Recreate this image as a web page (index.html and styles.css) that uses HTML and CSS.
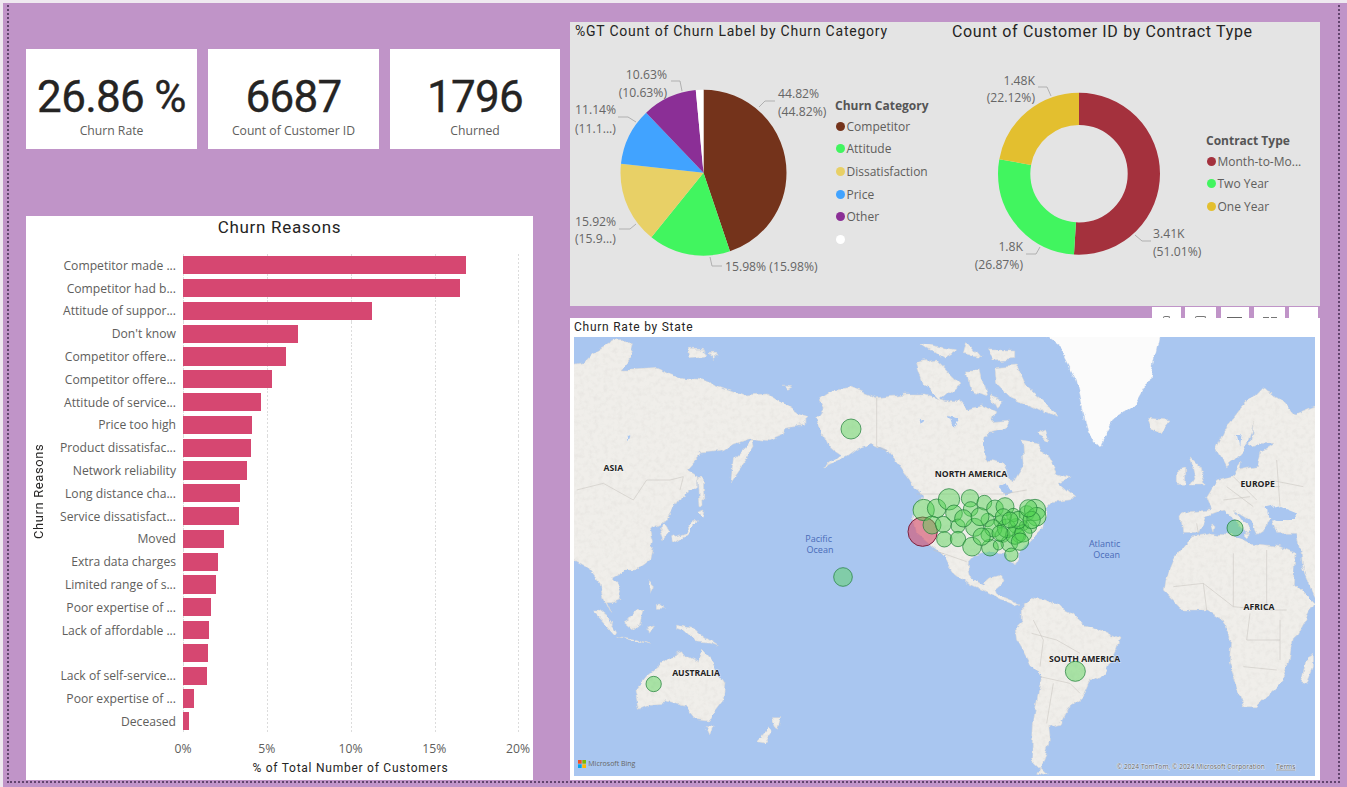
FILE: index.html
```html
<!DOCTYPE html>
<html lang="en">
<head>
<meta charset="utf-8">
<title>Churn Dashboard</title>
<link rel="stylesheet" href="styles.css">
</head>
<body>
<main class="report">
  <div class="guide"></div>
  <section class="left">
    <div class="kpis">
      <div class="card"><div class="value">26.86 %</div><div class="caption">Churn Rate</div></div>
      <div class="card"><div class="value">6687</div><div class="caption">Count of Customer ID</div></div>
      <div class="card"><div class="value">1796</div><div class="caption">Churned</div></div>
    </div>
    <div class="reasons">
      <h2 class="reasons-title">Churn Reasons</h2>
      <div class="bar-area">
        <div class="y-title">Churn Reasons</div>
        <div class="bars">
          <div class="row"><span class="lbl">Competitor made ...</span><span class="track"><i class="bar" style="width:282.5px"></i></span></div>
          <div class="row"><span class="lbl">Competitor had b...</span><span class="track"><i class="bar" style="width:277px"></i></span></div>
          <div class="row"><span class="lbl">Attitude of suppor...</span><span class="track"><i class="bar" style="width:189px"></i></span></div>
          <div class="row"><span class="lbl">Don't know</span><span class="track"><i class="bar" style="width:115px"></i></span></div>
          <div class="row"><span class="lbl">Competitor offere...</span><span class="track"><i class="bar" style="width:103px"></i></span></div>
          <div class="row"><span class="lbl">Competitor offere...</span><span class="track"><i class="bar" style="width:88.5px"></i></span></div>
          <div class="row"><span class="lbl">Attitude of service...</span><span class="track"><i class="bar" style="width:78px"></i></span></div>
          <div class="row"><span class="lbl">Price too high</span><span class="track"><i class="bar" style="width:69px"></i></span></div>
          <div class="row"><span class="lbl">Product dissatisfac...</span><span class="track"><i class="bar" style="width:68px"></i></span></div>
          <div class="row"><span class="lbl">Network reliability</span><span class="track"><i class="bar" style="width:64px"></i></span></div>
          <div class="row"><span class="lbl">Long distance cha...</span><span class="track"><i class="bar" style="width:57px"></i></span></div>
          <div class="row"><span class="lbl">Service dissatisfact...</span><span class="track"><i class="bar" style="width:56px"></i></span></div>
          <div class="row"><span class="lbl">Moved</span><span class="track"><i class="bar" style="width:41px"></i></span></div>
          <div class="row"><span class="lbl">Extra data charges</span><span class="track"><i class="bar" style="width:34.5px"></i></span></div>
          <div class="row"><span class="lbl">Limited range of s...</span><span class="track"><i class="bar" style="width:32.5px"></i></span></div>
          <div class="row"><span class="lbl">Poor expertise of ...</span><span class="track"><i class="bar" style="width:28px"></i></span></div>
          <div class="row"><span class="lbl">Lack of affordable ...</span><span class="track"><i class="bar" style="width:26px"></i></span></div>
          <div class="row"><span class="lbl"></span><span class="track"><i class="bar" style="width:25px"></i></span></div>
          <div class="row"><span class="lbl">Lack of self-service...</span><span class="track"><i class="bar" style="width:24px"></i></span></div>
          <div class="row"><span class="lbl">Poor expertise of ...</span><span class="track"><i class="bar" style="width:10.5px"></i></span></div>
          <div class="row"><span class="lbl">Deceased</span><span class="track"><i class="bar" style="width:5.5px"></i></span></div>
        </div>
      </div>
      <div class="ticks">
        <span class="tick">0%</span><span class="tick">5%</span><span class="tick">10%</span><span class="tick">15%</span><span class="tick">20%</span>
      </div>
      <div class="x-title">% of Total Number of Customers</div>
    </div>
  </section>

  <section class="right">
    <div class="charts">
      <article class="panel pie-panel">
        <h2 class="panel-title">%GT Count of Churn Label by Churn Category</h2>
        <div class="panel-body">
          <svg class="pie-svg" viewBox="570 48 262 258" width="262" height="258">
            <g fill="none" stroke-width="83" transform="rotate(-90 703.5 172.7)">
              <circle cx="703.5" cy="172.7" r="41.5" pathLength="100" stroke="#74331b" stroke-dasharray="44.82 55.18" stroke-dashoffset="0"/>
              <circle cx="703.5" cy="172.7" r="41.5" pathLength="100" stroke="#41f55f" stroke-dasharray="15.98 84.02" stroke-dashoffset="-44.82"/>
              <circle cx="703.5" cy="172.7" r="41.5" pathLength="100" stroke="#e8d066" stroke-dasharray="15.92 84.08" stroke-dashoffset="-60.8"/>
              <circle cx="703.5" cy="172.7" r="41.5" pathLength="100" stroke="#41a3ff" stroke-dasharray="11.14 88.86" stroke-dashoffset="-76.72"/>
              <circle cx="703.5" cy="172.7" r="41.5" pathLength="100" stroke="#8b2f96" stroke-dasharray="10.63 89.37" stroke-dashoffset="-87.86"/>
              <circle cx="703.5" cy="172.7" r="41.5" pathLength="100" stroke="#ffffff" stroke-dasharray="1.51 98.49" stroke-dashoffset="-98.49"/>
            </g>
            <g class="leaders">
              <polyline points="671,81 680,81 682,91"/>
              <polyline points="618,117 628,117 636,122"/>
              <polyline points="619,229 630,229 636,224"/>
              <polyline points="710,257 712,266 722,266"/>
              <polyline points="759,107 765,101 775,101"/>
            </g>
            <g class="dlabels">
              <text x="667" y="79" text-anchor="end">10.63%</text>
              <text x="667" y="97" text-anchor="end">(10.63%)</text>
              <text x="575" y="114">11.14%</text>
              <text x="575" y="133">(11.1...)</text>
              <text x="575" y="226">15.92%</text>
              <text x="575" y="243">(15.9...)</text>
              <text x="725" y="271">15.98% (15.98%)</text>
              <text x="778" y="98">44.82%</text>
              <text x="778" y="116">(44.82%)</text>
            </g>
          </svg>
          <div class="legend pie-legend">
            <div class="legend-title">Churn Category</div>
            <div class="legend-item"><i class="dot c-brown"></i>Competitor</div>
            <div class="legend-item"><i class="dot c-green"></i>Attitude</div>
            <div class="legend-item"><i class="dot c-sand"></i>Dissatisfaction</div>
            <div class="legend-item"><i class="dot c-blue"></i>Price</div>
            <div class="legend-item"><i class="dot c-purple"></i>Other</div>
            <div class="legend-item"><i class="dot c-white"></i></div>
          </div>
        </div>
      </article>
      <article class="panel donut-panel">
        <h2 class="panel-title donut-title">Count of Customer ID by Contract Type</h2>
        <div class="panel-body">
          <svg class="donut-svg" viewBox="947 48 258 258" width="258" height="258">
            <g fill="none" stroke-width="32.3" transform="rotate(-90 1079 173.7)">
              <circle cx="1079" cy="173.7" r="64.85" pathLength="100" stroke="#a4313d" stroke-dasharray="51.01 48.99" stroke-dashoffset="0"/>
              <circle cx="1079" cy="173.7" r="64.85" pathLength="100" stroke="#41f55f" stroke-dasharray="26.87 73.13" stroke-dashoffset="-51.01"/>
              <circle cx="1079" cy="173.7" r="64.85" pathLength="100" stroke="#e3bf2f" stroke-dasharray="22.12 77.88" stroke-dashoffset="-77.88"/>
            </g>
            <g class="leaders">
              <polyline points="1038,87 1047,87 1051,96"/>
              <polyline points="1026,254 1036,254 1040,247"/>
              <polyline points="1135,235 1142,241 1151,241"/>
            </g>
            <g class="dlabels">
              <text x="1035" y="85" text-anchor="end">1.48K</text>
              <text x="1035" y="102" text-anchor="end">(22.12%)</text>
              <text x="1023" y="251" text-anchor="end">1.8K</text>
              <text x="1023" y="269" text-anchor="end">(26.87%)</text>
              <text x="1153" y="238">3.41K</text>
              <text x="1153" y="256">(51.01%)</text>
            </g>
          </svg>
          <div class="legend donut-legend">
            <div class="legend-title">Contract Type</div>
            <div class="legend-item"><i class="dot c-maroon"></i>Month-to-Mo...</div>
            <div class="legend-item"><i class="dot c-green"></i>Two Year</div>
            <div class="legend-item"><i class="dot c-gold"></i>One Year</div>
          </div>
        </div>
      </article>
    </div>

    <div class="tabs">
      <span class="tab tab-a"><i class="mark mark-arc"></i></span>
      <span class="tab tab-b"><i class="mark mark-circle"></i></span>
      <span class="tab tab-c"><i class="mark mark-line"></i></span>
      <span class="tab tab-d"><i class="mark mark-dash"></i></span>
      <span class="tab tab-e"></span>
    </div>

    <article class="map-panel">
      <h2 class="map-title">Churn Rate by State</h2>
      <svg class="map" viewBox="12 51 2223 1317" width="741" height="439">
        <defs>
          <filter id="coast" x="-40" y="-40" width="2360" height="1480" filterUnits="userSpaceOnUse">
            <feTurbulence type="fractalNoise" baseFrequency=".022" numOctaves="5" seed="3" result="n"/>
            <feDisplacementMap in="SourceGraphic" in2="n" scale="26" xChannelSelector="R" yChannelSelector="G"/>
            <feGaussianBlur stdDeviation="1"/>
          </filter>
          <filter id="terrain" x="-40" y="-40" width="2360" height="1480" filterUnits="userSpaceOnUse">
            <feTurbulence type="fractalNoise" baseFrequency=".022" numOctaves="5" seed="3" result="n"/>
            <feDisplacementMap in="SourceGraphic" in2="n" scale="26" xChannelSelector="R" yChannelSelector="G" result="d"/>
            <feGaussianBlur in="d" stdDeviation="1" result="soft"/>
            <feTurbulence type="fractalNoise" baseFrequency=".07" numOctaves="4" seed="8" result="t"/>
            <feColorMatrix in="t" type="matrix" values="0 0 0 0 .55 0 0 0 0 .53 0 0 0 0 .5 .4 0 0 0 -.17" result="shade"/>
            <feComposite in="shade" in2="soft" operator="in" result="shaded"/>
            <feMerge><feMergeNode in="soft"/><feMergeNode in="shaded"/></feMerge>
          </filter>
        </defs>
        <rect class="water" x="12" y="51" width="2223" height="1317"/>
        <g class="land" filter="url(#terrain)">
          <path d="M-60 150L35 135 70 100 130 65 190 65 180 110 150 150 195 150 260 145 295 160 330 172 400 180 440 197 520 225 590 222 640 250 690 285 717 295 700 312 650 322 642 345 600 362 540 355 490 372 450 397 395 402 352 450 385 470 382 500 330 530 310 565 288 600 240 622 250 660 240 720 200 750 170 750 125 775 155 810 150 835 125 845 110 845 125 880 105 840 90 790 78 775 55 745 15 722 -60 722Z"/>
          <path d="M355 85L400 85 410 105 360 110Z M415 100L445 100 430 112Z M640 195L665 197 650 205Z"/>
          <path d="M482 490L490 420 530 380 548 355 552 385 530 420 495 470Z"/>
          <path d="M385 475L400 475 402 560 390 560Z M385 577L405 570 400 592Z M310 665L350 640 385 605 375 598 345 635 308 650Z M280 610L300 640 282 662 268 620Z"/>
          <path d="M65 870L100 905 135 945 140 935 115 895 85 870Z M140 952L190 965 240 975 190 960Z M160 905L190 930 215 915 225 875 205 870 185 890Z M235 785L250 800 240 820Z M262 850L280 865 262 865Z M230 920L250 915 240 940Z M320 915L370 925 400 950 445 980 420 970 385 965 350 935 320 925Z"/>
          <path d="M205 1165L195 1110 230 1065 290 1015 310 1005 340 995 355 1015 385 1030 395 990 420 1020 465 1090 460 1140 415 1200 375 1195 345 1160 290 1145 240 1150Z"/>
          <path d="M408 1220L430 1220 420 1245Z M560 1265L600 1220 610 1230 585 1270Z M610 1190L635 1190 625 1225Z"/>
          <path d="M745 240L790 205 840 200 920 233 1010 225 1060 225 1130 245 1170 245 1190 265 1240 255 1280 275 1270 305 1320 300 1300 330 1245 345 1240 370 1255 420 1300 430 1330 490 1360 440 1355 360 1410 370 1460 460 1505 475 1470 490 1520 535 1460 540 1432 570 1420 620 1380 660 1345 700 1340 720 1332 741 1310 700 1305 699 1260 696 1215 711 1194 735 1200 774 1236 795 1260 774 1290 765 1299 786 1278 804 1284 825 1320 840 1350 852 1335 858 1290 840 1245 816 1200 795 1155 759 1125 714 1101 690 1040 640 1030 590 1050 530 1040 510 990 440 950 392 900 370 860 388 830 410 760 445 810 405 780 385 740 300 760 270Z"/>
          <path d="M1275 140L1340 135 1370 200 1450 270 1460 295 1390 260 1320 230 1280 190Z M1040 130L1100 120 1170 190 1110 240 1060 190Z M1050 70L1160 90 1120 115Z M1250 90L1340 90 1340 115 1270 120Z M1190 60L1230 110 1180 100Z M1190 150L1230 150 1250 230 1200 210Z M1260 225L1300 240 1280 262Z M1400 345L1430 330 1440 365Z"/>
          <path d="M1360 845L1385 832 1430 840 1500 875 1540 915 1610 935 1650 955 1640 985 1605 1055 1560 1085 1540 1130 1490 1170 1470 1210 1430 1220 1435 1260 1420 1320 1400 1360 1435 1368 1385 1320 1390 1210 1405 1120 1415 1070 1380 1030 1340 960 1335 925 1360 900Z"/>
          <path d="M1785 780L1810 720 1840 680 1870 650 1930 640 2000 650 2040 670 2130 680 2175 700 2170 790 2230 850 2170 960 2160 1020 2130 1090 2060 1160 2020 1160 1975 1030 1980 950 1960 900 1910 870 1840 870 1780 810Z"/>
          <path d="M2195 1085L2210 1010 2230 1000 2230 1040 2210 1090Z"/>
          <path d="M2290 240L2175 285 2130 235 2070 208 2020 260 1970 320 1940 385 1970 440 1995 420 2030 380 2050 310 2040 380 2070 370 2115 370 2070 400 2060 440 2010 450 2015 430 1990 465 1940 480 1910 530 1925 570 1860 575 1830 590 1835 640 1885 640 1905 590 1960 570 2030 640 2040 630 1990 570 2040 600 2060 640 2090 620 2100 580 2120 640 2180 640 2190 690 2195 740 2235 830 2290 830Z"/>
          <path d="M1860 410L1890 440 1905 495 1860 495 1875 470Z M1825 455L1850 450 1850 490 1825 490Z M1730 295L1800 300 1770 335 1740 320Z M2020 640L2040 640 2030 650Z M1925 610L1935 610 1932 630Z"/>
        </g>
        <g class="overlay" filter="url(#coast)">
          <path class="ice" d="M1415 40L1770 40 1755 110 1740 180 1700 250 1630 300 1590 378 1555 340 1520 180 1470 80Z"/>
          <path class="lake" d="M2090 565L2130 555 2180 575 2170 600 2120 600 2095 590Z M170 340L178 345 172 362Z M1040 290L1060 295 1052 308Z M1140 290L1165 300 1150 320Z M1290 500L1310 490 1325 520 1300 530Z M2000 345L2012 345 2008 380Z"/>
        </g>
        <g class="borders" fill="none">
          <path d="M20 510L100 490 190 540 230 480 300 480 340 470 330 510M920 233L920 380 950 392M1040 522L1300 522 1370 510M1090 690L1190 725M1385 940L1460 960 1530 1000M1410 1070L1500 1090 1530 1120M1450 1090L1430 1210M1390 900L1420 960 1410 1040M1810 800L1900 790 1990 860 2090 870 2150 870M1900 790L1910 870M1990 700L1990 860M2090 690L2090 870M2030 960L2130 960M2020 1040L2120 1050M2040 880L2030 960M2130 900L2130 1020M1970 500L2050 560M1990 470L2060 540M2120 420L2130 560M2100 480L2200 500M2040 500L2130 500M1960 540L2040 530M1880 610L1885 640"/>
        </g>
        <g class="labels">
          <text x="130" y="452" text-anchor="middle">ASIA</text>
          <text x="1203" y="471" text-anchor="middle">NORTH AMERICA</text>
          <text x="2063" y="500" text-anchor="middle">EUROPE</text>
          <text x="2067" y="869" text-anchor="middle">AFRICA</text>
          <text x="1544" y="1025" text-anchor="middle">SOUTH AMERICA</text>
          <text x="378" y="1069" text-anchor="middle">AUSTRALIA</text>
        </g>
        <g class="oceans">
          <text x="746" y="665" text-anchor="middle">Pacific</text>
          <text x="750" y="698" text-anchor="middle">Ocean</text>
          <text x="1604" y="680" text-anchor="middle">Atlantic</text>
          <text x="1610" y="713" text-anchor="middle">Ocean</text>
        </g>
        <circle class="bub-red" cx="1058" cy="635" r="44"/>
        <g class="bubs">
          <circle cx="1061" cy="570" r="32"/><circle cx="1100" cy="565" r="28"/><circle cx="1137" cy="538" r="32"/><circle cx="1086" cy="615" r="27"/><circle cx="1152" cy="580" r="25"/><circle cx="1200" cy="535" r="26"/><circle cx="1202" cy="567" r="22"/><circle cx="1243" cy="548" r="22"/><circle cx="1275" cy="565" r="25"/><circle cx="1305" cy="560" r="27"/><circle cx="1120" cy="613" r="24"/><circle cx="1164" cy="618" r="21"/><circle cx="1123" cy="658" r="23"/><circle cx="1164" cy="657" r="23"/><circle cx="1214" cy="622" r="27"/><circle cx="1206" cy="680" r="28"/><circle cx="1260" cy="683" r="25"/><circle cx="1253" cy="645" r="20"/><circle cx="1253" cy="600" r="20"/><circle cx="1290" cy="605" r="18"/><circle cx="1298" cy="645" r="22"/><circle cx="1338" cy="618" r="22"/><circle cx="1347" cy="648" r="20"/><circle cx="1318" cy="670" r="25"/><circle cx="1324" cy="704" r="20"/><circle cx="1370" cy="580" r="23"/><circle cx="1395" cy="570" r="32"/><circle cx="1400" cy="590" r="28"/><circle cx="1362" cy="617" r="14"/><circle cx="1380" cy="620" r="20"/><circle cx="1330" cy="585" r="20"/><circle cx="1285" cy="675" r="15"/>
          <circle cx="1180" cy="595" r="26"/><circle cx="1230" cy="590" r="27"/><circle cx="1270" cy="625" r="26"/><circle cx="1310" cy="625" r="28"/><circle cx="1335" cy="645" r="28"/><circle cx="1360" cy="640" r="26"/><circle cx="1345" cy="600" r="26"/><circle cx="1385" cy="600" r="26"/><circle cx="1300" cy="590" r="24"/><circle cx="1235" cy="650" r="26"/><circle cx="1350" cy="665" r="26"/><circle cx="1375" cy="565" r="26"/><circle cx="1320" cy="600" r="24"/><circle cx="1290" cy="640" r="24"/>
          <circle cx="843" cy="327" r="30"/><circle cx="819" cy="771" r="28"/><circle cx="251" cy="1092" r="23"/><circle cx="1516" cy="1054" r="30"/><circle cx="1995" cy="624" r="24"/>
        </g>
        <g class="ms-logo">
          <rect class="ms-r" x="24" y="1320" width="11" height="11"/><rect class="ms-g" x="37" y="1320" width="11" height="11"/><rect class="ms-b" x="24" y="1333" width="11" height="11"/><rect class="ms-y" x="37" y="1333" width="11" height="11"/>
        </g>
        <text class="bing" x="55" y="1339">Microsoft Bing</text>
        <text class="attrib" x="1640" y="1346">© 2024 TomTom, © 2024 Microsoft Corporation</text>
        <text class="attrib terms" x="2118" y="1346">Terms</text>
      </svg>
    </article>
  </section>
</main>
</body>
</html>
```
FILE: styles.css
```css
* { box-sizing: border-box; }
html, body { margin: 0; padding: 0; }
body { background: #c094c8; overflow: hidden; }

.report {
  position: relative;
  width: 1347px;
  height: 787px;
  overflow: hidden;
  border-top: 3px solid #efe9f0;
  border-left: 3px solid #efe9f0;
  padding: 19px 0 0 23px;
  display: grid;
  grid-template-columns: 534px 750px;
  column-gap: 10px;
  align-items: start;
  font-family: "Open Sans", "Noto Sans", sans-serif;
}
.guide {
  position: absolute;
  left: 4px;
  top: -3px;
  width: 1333px;
  height: 783px;
  border: 2px dotted #62446e;
  border-top: 0;
  pointer-events: none;
  z-index: 5;
}

/* KPI cards */
.left { padding-top: 27px; }
.kpis { display: grid; grid-template-columns: 171px 171px 170px; column-gap: 11px; }
.card {
  height: 100px;
  background: #fff;
  padding-top: 23px;
  text-align: center;
}
.value {
  font-family: Roboto, sans-serif;
  font-size: 44px;
  font-weight: 400;
  -webkit-text-stroke: 0.35px #252423;
  line-height: 50px;
  color: #252423;
  letter-spacing: -0.7px;
}
.caption { font-size: 12.2px; line-height: 17px; color: #605e5c; }

/* Bar chart */
.reasons {
  margin-top: 67px;
  width: 507px;
  height: 564px;
  background: #fff;
  display: flex;
  flex-direction: column;
}
.reasons-title {
  margin: 0;
  height: 38px;
  padding-top: 1px;
  text-align: center;
  font: 400 17px/20px Roboto, sans-serif;
  letter-spacing: 0.7px;
  color: #252423;
}
.bar-area { display: flex; height: 479px; }
.y-title {
  width: 20px;
  height: 475px;
  margin-left: 5px;
  writing-mode: vertical-rl;
  transform: rotate(180deg);
  text-align: center;
  font: 400 13px/16px Roboto, sans-serif;
  letter-spacing: 0.6px;
  color: #252423;
}
.bars {
  display: flex;
  flex-direction: column;
  width: 482px;
}
.row { display: flex; align-items: center; height: 22.8px; flex: none; }
.lbl {
  width: 125px;
  margin-right: 7px;
  text-align: right;
  white-space: nowrap;
  font-size: 12.15px;
  color: #605e5c;
}
.track {
  display: block;
  height: 22.8px;
  width: 340px;
  padding-top: 2.2px;
  background-image:
    linear-gradient(#dcdcdc 50%, transparent 50%),
    linear-gradient(#dcdcdc 50%, transparent 50%),
    linear-gradient(#dcdcdc 50%, transparent 50%),
    linear-gradient(#dcdcdc 50%, transparent 50%),
    linear-gradient(#dcdcdc 50%, transparent 50%);
  background-size: 1px 4px;
  background-repeat: repeat-y;
  background-position: 0 0, 84px 0, 167.5px 0, 251.5px 0, 335px 0;
}
.bar { display: block; height: 18.3px; background: #d64771; }
.ticks {
  display: flex;
  justify-content: space-between;
  width: 335px;
  margin-left: 157px;
  height: 28px;
  padding-top: 7px;
  font-size: 12.2px;
  line-height: 17px;
  color: #605e5c;
}
.tick { width: 0; display: flex; justify-content: center; white-space: nowrap; }
.x-title {
  width: 335px;
  margin-left: 157px;
  text-align: center;
  font: 400 12px/14px Roboto, sans-serif;
  letter-spacing: 0.75px;
  color: #252423;
}

/* Charts */
.charts { display: flex; height: 284px; }
.panel { background: #e4e4e4; height: 284px; }
.pie-panel { width: 377px; }
.donut-panel { width: 373px; }
.panel-title {
  margin: 0;
  height: 26px;
  padding: 0 0 0 5px;
  font: 400 14px/18px Roboto, sans-serif;
  letter-spacing: 0.77px;
  color: #252423;
  white-space: nowrap;
}
.donut-title { font-size: 16px; line-height: 20px; letter-spacing: 0.65px; }
.panel-body { display: flex; height: 258px; }
.pie-svg, .donut-svg { display: block; flex: none; }
.leaders polyline { fill: none; stroke: #b0b0b0; stroke-width: 1; }
.dlabels text { font-size: 12.2px; fill: #666; font-family: "Open Sans", sans-serif; }

.legend { font-size: 12px; color: #605e5c; }
.pie-legend { padding: 49px 0 0 3px; }
.donut-legend { padding: 84px 0 0 1px; }
.legend-title { font-weight: 700; line-height: 17px; height: 18px; color: #555; white-space: nowrap; }
.legend-item { display: flex; align-items: center; height: 22.6px; white-space: nowrap; }
.dot { width: 9px; height: 9px; border-radius: 50%; margin: 0 1.5px 0 1px; flex: none; }
.c-brown { background: #74331b; }
.c-green { background: #41f55f; }
.c-sand { background: #e8d066; }
.c-blue { background: #41a3ff; }
.c-purple { background: #8b2f96; }
.c-white { background: #fff; }
.c-maroon { background: #a4313d; }
.c-gold { background: #e3bf2f; }

/* Tabs peeking above the map */
.tabs {
  display: flex;
  height: 12px;
  padding: 1px 0 0 582px;
}
.tab { display: block; height: 11px; background: #fff; position: relative; margin-right: 4px; }
.tab-a { width: 29px; }
.tab-b { width: 31px; margin-right: 5px; }
.tab-c { width: 28px; margin-right: 5px; }
.tab-d { width: 31px; }
.tab-e { width: 29px; margin-right: 0; }
.mark { position: absolute; display: block; bottom: 0; }
.mark-arc { left: 11px; width: 7px; height: 2px; border: 1px solid #777; border-bottom: 0; border-radius: 4px 4px 0 0; }
.mark-circle { left: 10px; width: 11px; height: 2px; border: 1px solid #777; border-bottom: 0; border-radius: 6px 6px 0 0; }
.mark-line { left: 6px; width: 15px; height: 1px; background: #666; }
.mark-dash { left: 9px; width: 14px; height: 1px; background: repeating-linear-gradient(90deg, #777 0 6px, transparent 6px 8px); }

/* Map */
.map-panel { background: #fff; height: 462px; padding: 0 5px 0 4px; }
.map-title {
  margin: 0;
  height: 19px;
  padding-top: 1px;
  font: 400 12px/17px Roboto, sans-serif;
  letter-spacing: 0.75px;
  color: #252423;
}
.map { display: block; }
.water { fill: #a9c6f0; }
.land path { fill: #f0eeea; stroke: #dedbd5; stroke-width: 1.5; }
.overlay .ice { fill: #fbfbfb; stroke: #e8e8e8; }
.overlay .lake { fill: #a9c6f0; stroke: none; }
.borders path { stroke: #c6c3bc; stroke-width: 1.6; }
.labels text {
  font-family: "Open Sans", sans-serif;
  font-weight: 700;
  font-size: 26px;
  fill: #222;
  paint-order: stroke;
  stroke: rgba(255, 255, 255, .6);
  stroke-width: 3px;
}
.oceans text { font-family: "Open Sans", sans-serif; font-size: 27px; fill: #4a6cb8; }
.bubs circle { fill: rgba(80, 210, 80, .45); stroke: rgba(30, 125, 55, .7); stroke-width: 3; }
.bub-red { fill: rgba(214, 80, 110, .62); stroke: #7d2440; stroke-width: 3; }
.ms-r { fill: #f25022; } .ms-g { fill: #7fba00; } .ms-b { fill: #00a4ef; } .ms-y { fill: #ffb900; }
.bing { font-family: "Open Sans", sans-serif; font-size: 21px; fill: #666; }
.attrib { font-family: "Open Sans", sans-serif; font-size: 20px; fill: #666; paint-order: stroke; stroke: rgba(255,255,255,.6); stroke-width: 3px; }
.terms { text-decoration: underline; }
```
